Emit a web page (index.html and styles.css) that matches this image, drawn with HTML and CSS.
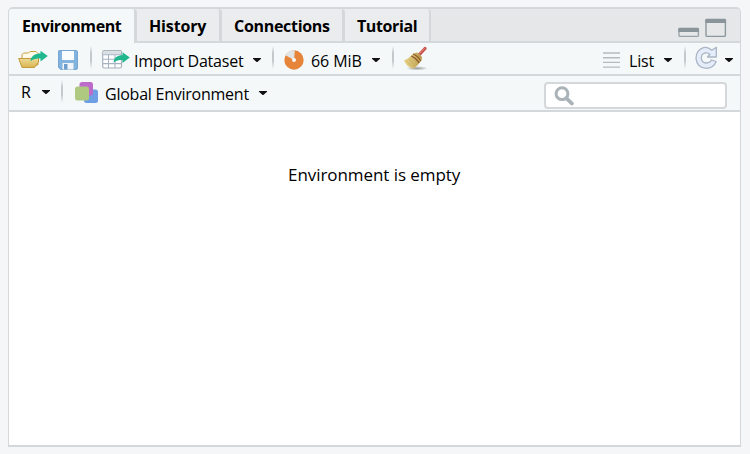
FILE: index.html
```
<!DOCTYPE html>
<html lang="en">
<head>
<meta charset="utf-8">
<title>Environment</title>
<link rel="stylesheet" href="styles.css">
</head>
<body>
<main class="pane">
  <header class="tabs">
    <div class="tab active"><span class="t-env">Environment</span></div>
    <div class="tab history"><span class="t-his">History</span></div>
    <div class="tab connections"><span class="t-con">Connections</span></div>
    <div class="tab tutorial"><span class="t-tut">Tutorial</span></div>
    <svg class="window-controls" width="50" height="20" viewBox="0 0 50 20">
      <rect x="1" y="10.8" width="19.4" height="7.6" rx="1" fill="#e6e7e8" stroke="#9aa5a9" stroke-width="1.4"/>
      <path d="M0.3 14V11Q0.3 9.7 1.6 9.7H19.8Q21 9.7 21 11V14Z" fill="#89959a"/>
      <rect x="28" y="1.8" width="19.4" height="16.6" rx="1" fill="#e6e7e8" stroke="#8b979c" stroke-width="1.4"/>
      <path d="M27.3 5V2Q27.3 .8 28.6 .8H46.8Q48.1 .8 48.1 2V5Z" fill="#89959a"/>
    </svg>
  </header>

  <div class="toolbar primary">
    <svg class="icon open" width="31" height="22" viewBox="0 0 31 22">
      <defs><linearGradient id="fold" x1="0" y1="0" x2="0" y2="1"><stop stop-color="#f2e4a8"/><stop offset="1" stop-color="#d9b550"/></linearGradient></defs>
      <path d="M4 17V6.500L5.500 5H10.500L12 3.500H18L20 5.500V17Z" fill="#fffbe8" stroke="#c9a044"/>
      <path d="M.7 10.500H17L20.500 8V14L16.500 19.500H4Z" fill="url(#fold)" stroke="#c39a3c"/>
      <path d="M12.500 13.200C13 8 17 5.600 22.500 5.600V2.800L29.800 8L22.500 13.500V10.600C18.500 10 15.500 11 12.500 13.200Z" fill="#20b78f"/>
    </svg>
    <svg class="icon save" width="20" height="20" viewBox="0 0 20 20">
      <path d="M1 .6H18.300Q19.400 .6 19.400 1.700V18.200Q19.400 19.400 18.300 19.400H2.600L.6 17.500V1.500Q.6 .6 1 .6Z" fill="#82b4df" stroke="#6fa0ce"/>
      <rect x="4" y="1" width="12" height="9" fill="#fbfcfd"/>
      <rect x="4.500" y="13" width="11" height="6.500" fill="#f1f5f8"/>
      <rect x="6" y="14" width="3.500" height="5.500" fill="#6c9dcc"/>
    </svg>
    <i class="sep sep-a"></i>
    <svg class="icon import" width="29" height="21" viewBox="0 0 29 21">
      <rect x=".7" y="1.700" width="18.800" height="17.300" rx="1.500" fill="#fff" stroke="#a7b2bb" stroke-width="1.200"/>
      <path d="M1.200 2.200H19V5.500H1.200Z" fill="#d9dfe5"/>
      <path d="M1 5.800H19M1 10.200H19M1 14.600H19M6.500 6V19M13 6V19" stroke="#a7b2c2" stroke-width="1.100"/>
      <path d="M11.500 13.400C12 8.500 15.500 6.200 20.500 6.200V3.200L27.800 8.500L20.500 14V11.200C17 10.500 14.500 11.500 11.500 13.400Z" fill="#20b78f"/>
    </svg>
    <span class="label l-import">Import Dataset</span>
    <i class="caret c-import"></i>
    <i class="sep sep-b"></i>
    <svg class="icon memory" width="20" height="20" viewBox="0 0 20 20">
      <circle cx="10" cy="10" r="9.700" fill="#e6853a"/>
      <path d="M10 10L1.500 5.200A9.700 9.700 0 0 1 10.800 .3Z" fill="#e2e3e5"/>
      <circle cx="10" cy="10" r="2" fill="#f8faf9"/>
    </svg>
    <span class="label l-mib">66 MiB</span>
    <i class="caret c-mib"></i>
    <i class="sep sep-c"></i>
    <svg class="icon broom" width="26" height="26" viewBox="0 0 26 26">
      <defs>
        <linearGradient id="straw"><stop stop-color="#eddb91"/><stop offset="1" stop-color="#b8974a"/></linearGradient>
        <radialGradient id="shade"><stop stop-color="#777" stop-opacity=".75"/><stop offset="1" stop-color="#777" stop-opacity="0"/></radialGradient>
      </defs>
      <ellipse cx="14" cy="22.300" rx="11" ry="2.200" fill="url(#shade)"/>
      <path d="M15.500 9.500L22 2.500" stroke="#c9524b" stroke-width="3.300" stroke-linecap="round"/>
      <path d="M16.500 7.500L21.700 1.900" stroke="#e78a80" stroke-width="1"/>
      <path d="M10.500 7.500L14 6.500Q17 8 19 11L18.500 14.500Q14.500 20 10.500 22.800Q3.500 21 .8 14.500Q6 12.500 10.500 7.500Z" fill="url(#straw)"/>
      <path d="M10.200 8Q15 10 17.800 15M8.300 10Q13 12 16.300 17" fill="none" stroke="#8e5a2b" stroke-width="1.200"/>
      <path d="M3 14.500L8 20M6 13L11 20" stroke="#c2a655" stroke-width=".6"/>
    </svg>
    <svg class="icon list" width="17" height="17" viewBox="0 0 17 17">
      <path d="M0 1H17M0 5.700H17M0 10.400H17M0 15.100H17" stroke="#b6babd" stroke-width="1.400"/>
    </svg>
    <span class="label l-list">List</span>
    <i class="caret c-list"></i>
    <i class="sep sep-d"></i>
    <svg class="icon refresh" width="23" height="24" viewBox="0 0 23 24">
      <path d="M16.800 4.200L21.300 1.300V11H12.500L15 8.300Q12.500 6.300 9.800 7Q6.300 8.200 6.300 12Q6.500 16.800 11.300 17Q15 16.900 16.500 14L21.200 15.500Q18.500 22 11.500 22.400Q2 22 1 12.500Q1 4 8.500 1.600Q13 .7 16.800 4.200Z" fill="#e5ecfa" stroke="#a9b4c4" stroke-width="1.300" stroke-linejoin="round"/>
    </svg>
    <i class="caret c-refresh"></i>
  </div>

  <div class="toolbar secondary">
    <span class="label l-r">R</span>
    <i class="caret c-r"></i>
    <i class="sep sep-e"></i>
    <svg class="icon global" width="23" height="22" viewBox="0 0 23 22">
      <rect x="9" y="7.500" width="14" height="13.500" rx="2.500" fill="#6d9fe4"/>
      <rect x="4.500" y="0" width="13.500" height="13.500" rx="2.500" fill="#bd6bcb"/>
      <rect x="0" y="4.500" width="14" height="14" rx="2.500" fill="#b0c981"/>
    </svg>
    <span class="label l-global">Global Environment</span>
    <i class="caret c-global"></i>
    <label class="search">
      <svg width="22" height="21" viewBox="0 0 22 21"><circle cx="8" cy="7.700" r="5.900" fill="none" stroke="#a9b3b8" stroke-width="3"/><path d="M12.300 12.200L18 17.600" stroke="#a9b3b8" stroke-width="3.700" stroke-linecap="round"/></svg>
    </label>
  </div>
  <section class="content"><span class="label l-empty">Environment is empty</span></section>
</main>
</body>
</html>
```
FILE: styles.css
```
* { box-sizing: border-box; }
body {
  margin: 0;
  height: 454px;
  padding: 7px 9px 7px 8px;
  background: #f5f6f8;
  color: #000;
  font: 16px/24px "Open Sans", "Noto Sans", sans-serif;
  overflow: hidden;
}
.pane {
  display: flex;
  flex-direction: column;
  width: 733px;
  height: 440px;
  border: 1px solid #d5d8db;
  border-top-width: 2px;
  border-bottom-width: 2px;
  border-radius: 5px 5px 0 0;
  background: #fff;
  overflow: hidden;
}
.tabs {
  display: flex;
  height: 34px;
  flex: none;
  background: #e6e7e8;
  box-shadow: inset 0 -2px #d5d8db;
}
.tab {
  height: 32px;
  padding: 5px 0 0 13px;
  border-right: 3px solid #d5d8db;
  border-radius: 0 4px 0 0;
  background: #ebecee;
  font-weight: 700;
  white-space: nowrap;
}
.tab.active { width: 128px; height: 34px; background: #f4f8f9; }
.history { width: 85px; }
.connections { width: 123px; }
.tab.tutorial { width: 86px; border-right-width: 2px; }
.t-env { letter-spacing: -.4px; }
.t-his { letter-spacing: -.15px; }
.t-con { letter-spacing: -.3px; }
.t-tut { letter-spacing: -.4px; }
.connections, .tutorial { padding-left: 12px; }
.history { padding-left: 12px; }
.window-controls { margin: 9px 12px 0 auto; }
.toolbar {
  display: flex;
  flex: none;
  align-items: flex-start;
  background: #f4f8f9;
  border-bottom: 2px solid #d5d8db;
  white-space: nowrap;
}
.primary { height: 33px; }
.secondary { height: 36px; }
.icon, .label, .caret, .sep, .search { flex: none; }
.label { display: block; }
.primary .label { margin-top: 6px; }
.sep { width: 2px; height: 23px; background: linear-gradient(#d5d8db00, #c5c9cc 30%, #c5c9cc 65%, #d5d8db00); }
.caret { width: 8px; height: 4px; background: #111; clip-path: polygon(0 0, 100% 0, 100% 20%, 55% 100%, 45% 100%, 0 20%); }
.primary .caret { margin-top: 15px; }
.primary .sep { margin-top: 3px; }

.open { margin: 5px 0 0 9px; }
.save { margin: 7px 0 0 9px; }
.sep-a { margin-left: 12px; }
.import { margin: 6px 0 0 10px; }
.l-import { width: 119px; margin-left: 3px; letter-spacing: -.22px; }
.sep-b { margin-left: 11px; }
.memory { margin: 7px 0 0 10px; }
.l-mib { width: 61px; margin-left: 7px; letter-spacing: -.1px; }
.sep-c { margin-left: 12px; }
.broom { margin: 3px 0 0 9px; }
.list { margin: 9px 0 0 174px; }
.l-list { width: 35px; margin-left: 9px; letter-spacing: -.2px; }
.sep-d { margin-left: 12px; }
.refresh { margin: 3px 0 0 9px; }
.c-refresh { margin-left: 7px; }

.l-r { width: 21px; margin: 4px 0 0 12px; }
.c-r { margin-top: 14px; }
.sep-e { margin: 4px 0 0 11px; }
.global { margin: 6px 0 0 12px; }
.l-global { width: 154px; margin: 6px 0 0 7px; letter-spacing: -.24px; }
.c-global { margin-top: 15px; }
.search {
  width: 183px;
  height: 27px;
  margin: 6px 13px 0 auto;
  padding: 2px 0 0 8px;
  border: 2px solid #d5d8db;
  border-radius: 4px;
  background: #fff;
}
.search svg { display: block; }
.content { flex: 1; padding: 51px 0 0 279px; }
.l-empty { font-size: 17px; letter-spacing: -.06px; }
```
